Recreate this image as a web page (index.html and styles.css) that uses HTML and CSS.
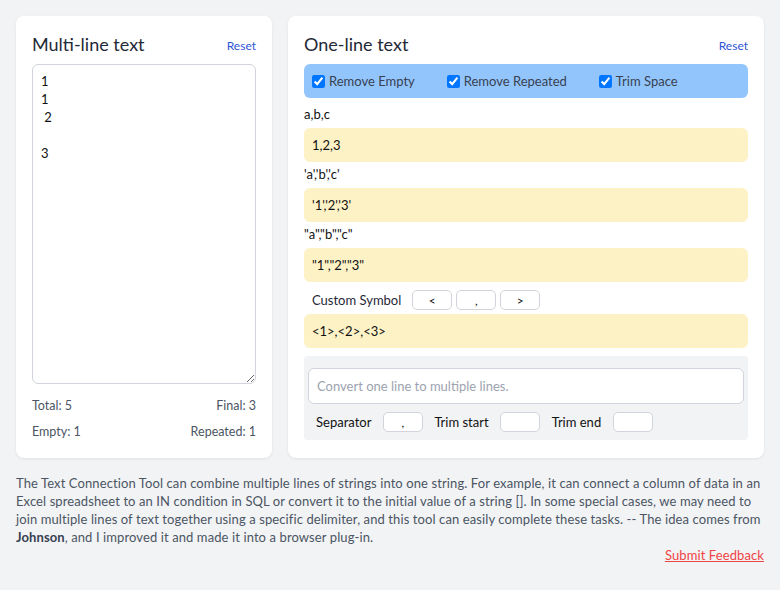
FILE: index.html
```html
<!DOCTYPE html>
<html lang="en">
<head>
  <meta charset="UTF-8">
  <title>Text Connection Tool</title>
  <link rel="stylesheet" href="styles.css">
</head>
<body>
  <div class="main">
    <div class="card left">
      <div class="head">
        <span class="title">Multi-line text</span>
        <a class="reset">Reset</a>
      </div>
      <textarea class="source">1
1
 2

3</textarea>
      <div class="stats">
        <span>Total: 5</span>
        <span>Final: 3</span>
      </div>
      <div class="stats">
        <span>Empty: 1</span>
        <span>Repeated: 1</span>
      </div>
    </div>
    <div class="card right">
      <div class="head">
        <span class="title">One-line text</span>
        <a class="reset">Reset</a>
      </div>
      <div class="options">
        <label><input type="checkbox" checked> Remove Empty</label>
        <label><input type="checkbox" checked> Remove Repeated</label>
        <label><input type="checkbox" checked> Trim Space</label>
      </div>
      <div class="label first">a,b,c</div>
      <div class="result">1,2,3</div>
      <div class="label">'a','b','c'</div>
      <div class="result">'1','2','3'</div>
      <div class="label">"a","b","c"</div>
      <div class="result">"1","2","3"</div>
      <div class="custom">
        <span>Custom Symbol</span>
        <input class="small" type="text" value="<">
        <input class="small" type="text" value=",">
        <input class="small" type="text" value=">">
      </div>
      <div class="result">&lt;1&gt;,&lt;2&gt;,&lt;3&gt;</div>
      <div class="split">
        <input class="line" type="text" placeholder="Convert one line to multiple lines.">
        <div class="split-row">
          <span>Separator</span>
          <input class="small" type="text" value=",">
          <span>Trim start</span>
          <input class="small" type="text">
          <span>Trim end</span>
          <input class="small" type="text">
        </div>
      </div>
    </div>
  </div>
  <div class="about">
    <p>The Text Connection Tool can combine multiple lines of strings into one string. For example, it can connect a column of data in an Excel spreadsheet to an IN condition in SQL or convert it to the initial value of a string []. In some special cases, we may need to join multiple lines of text together using a specific delimiter, and this tool can easily complete these tasks. -- The idea comes from <b>Johnson</b>, and I improved it and made it into a browser plug-in.</p>
    <div class="feedback"><a>Submit Feedback</a></div>
  </div>
</body>
</html>
```

FILE: styles.css
```css
* {
  box-sizing: border-box;
  margin: 0;
  padding: 0;
}
body {
  background-color: #f2f3f5;
  font-family: Lato, "Liberation Sans", sans-serif;
  font-size: 13px;
  color: #1f2937;
  padding: 16px;
}
.main {
  display: grid;
  grid-template-columns: 256px 1fr;
  gap: 16px;
}
.card {
  background: #fff;
  border-radius: 8px;
  box-shadow: 0 1px 3px rgba(0, 0, 0, 0.08);
  padding: 16px;
  display: flex;
  flex-direction: column;
}
.head {
  display: flex;
  justify-content: space-between;
  align-items: flex-end;
  height: 24px;
  margin-bottom: 8px;
}
.title {
  font-size: 18px;
  line-height: 24px;
  color: #1f2937;
}
.reset {
  font-size: 12px;
  line-height: 20px;
  color: #2f55d4;
  cursor: pointer;
}
.source {
  height: 320px;
  width: 100%;
  border: 1px solid #d1d5db;
  border-radius: 6px;
  padding: 7px 8px;
  font-family: inherit;
  font-size: 13px;
  line-height: 18px;
  color: #111;
  resize: vertical;
  outline: none;
}
.stats {
  display: flex;
  justify-content: space-between;
  color: #4b5563;
  font-size: 12.5px;
  line-height: 20px;
  margin-top: 12px;
}
.stats + .stats {
  margin-top: 6px;
}
.options {
  background-color: #93c5fd;
  border-radius: 6px;
  height: 34px;
  display: flex;
  align-items: center;
  gap: 32px;
  padding-left: 8px;
  color: #374151;
}
.options label {
  display: flex;
  align-items: center;
  gap: 4px;
}
.options input {
  width: 13px;
  height: 13px;
  margin: 0;
}
.label {
  line-height: 20px;
  margin: 2px 0 4px;
  color: #111;
}
.label.first {
  margin-top: 6px;
}
.result {
  background-color: #fdf2c6;
  border-radius: 6px;
  height: 34px;
  line-height: 34px;
  padding-left: 8px;
  color: #111;
}
.custom {
  display: flex;
  align-items: center;
  height: 28px;
  margin-top: 4px;
  padding-left: 8px;
  gap: 4px;
}
.custom span {
  margin-right: 7px;
}
.small {
  width: 40px;
  height: 20px;
  border: 1px solid #d1d5db;
  border-radius: 5px;
  text-align: center;
  font-family: inherit;
  font-size: 12px;
  color: #111;
  background: #fff;
  outline: none;
}
.split {
  margin-top: 8px;
  background-color: #f2f3f5;
  border-radius: 4px;
  padding: 12px 4px 8px;
}
.line {
  width: 100%;
  height: 36px;
  border: 1px solid #d1d5db;
  border-radius: 6px;
  padding: 0 8px;
  font-family: inherit;
  font-size: 13px;
  outline: none;
}
.line::placeholder {
  color: #9ca3af;
}
.split-row {
  display: flex;
  align-items: center;
  gap: 11.5px;
  margin-top: 8px;
  padding-left: 8px;
  height: 20px;
  color: #111;
}
.about {
  margin-top: 16px;
  color: #4b5563;
  line-height: 18px;
  letter-spacing: 0.1px;
}
.about b {
  color: #374151;
}
.feedback {
  text-align: right;
}
.feedback a {
  color: #ef4444;
  text-decoration: underline;
  cursor: pointer;
}
```
